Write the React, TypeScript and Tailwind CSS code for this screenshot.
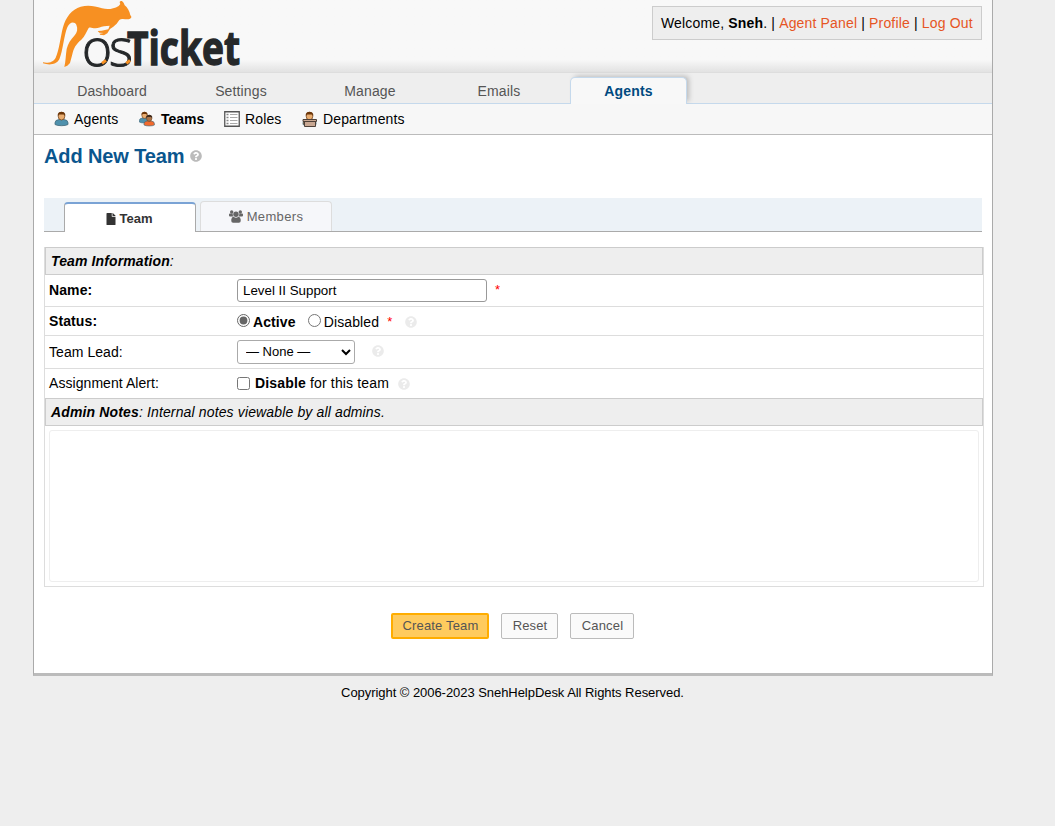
import React from "react";
import { FaQuestionCircle, FaFile } from "react-icons/fa";

function Logo() {
  return (
    <svg className="block h-[72px] w-[225px] shrink-0 overflow-visible" viewBox="0 0 675 216">
      <path
        fill="#f79022"
        d="M39 187C54 190 70 187 77 173C88 150 91 112 99 82C107 52 125 28 152 20C178 14 194 19 216 25C232 29 249 28 266 18L271 12C267 6 270 2 275 3C280 5 282 10 284 16C292 22 299 33 301 46C308 52 302 58 292 58C283 57 274 55 268 60L260 71L250 80L240 87L232 100L222 106L210 104L209 101L221 99L208 98L203 93L215 92L235 88L239 77L222 79C211 81 206 85 196 85C187 85 181 80 176 84C169 96 165 109 154 119C138 132 131 144 127 163L120 189L112 197L103 201C107 186 107 166 110 147C114 130 122 119 133 107C142 98 144 86 139 74C134 64 119 64 112 82C101 109 99 153 88 178C78 196 55 195 39 190Z"
      />
      <g fill="#25282a" stroke="#25282a" fontFamily='"Open Sans", "Noto Sans", sans-serif'>
        <text y="198" fontSize="154" fontWeight="300" strokeWidth="3">
          <tspan x="156">o</tspan>
          <tspan x="237">s</tspan>
        </text>
        <text x="291" y="196" fontSize="140" fontWeight="700" strokeWidth="4" textLength="339" lengthAdjust="spacingAndGlyphs">Ticket</text>
      </g>
      <path d="M216 190L228 181M289 190L300 181" stroke="#f79022" strokeWidth="9" />
    </svg>
  );
}

function Person({ shirt = "#4f91ad", skin = "#e9ad70", hair = "#6b3508" }: { shirt?: string; skin?: string; hair?: string }) {
  return (
    <g>
      <path d="M1 13.500v-1.700Q1 9 5 8.500h5q4 .5 4 3.300v1.700q-2 1.200-6.500 1.200T1 13.500Z" fill={shirt} stroke="#44697a" strokeWidth=".8" />
      <ellipse cx="7.500" cy="5.200" rx="3.300" ry="3.800" fill={skin} stroke="#75441c" strokeWidth=".8" />
      <path d="M3.800 5V3Q4.500.8 7.500.8T11.200 3v2L10 3.500H5Z" fill={hair} />
    </g>
  );
}

function NavIcon({ kind }: { kind: string }) {
  return (
    <svg className="block size-4 shrink-0" viewBox="0 0 16 16">
      {kind === "agents" && <Person />}
      {kind === "teams" && (
        <>
          <g transform="translate(-.5 .2) scale(.8)"><Person /></g>
          <g transform="translate(4.200 3.200) scale(.8)"><Person shirt="#f2692c" skin="#a87349" hair="#3e2a1c" /></g>
        </>
      )}
      {kind === "roles" && (
        <>
          <path d="M.75.75h14.500v14.500H.750Z" fill="#fff" stroke="#555" strokeWidth="1.300" />
          <path d="M2.500 3.500h2M2.500 6.500h2M2.500 9.500h2M2.500 12.500h2" stroke="#888" strokeWidth="1.600" />
          <path d="M6 3.500h7.500M6 6.500h7.500M6 9.500h7.500M6 12.500h7.500" stroke="#aaa" />
        </>
      )}
      {kind === "departments" && (
        <>
          <Person shirt="#8b5a2b" />
          <path d="M1 8.500h13.500v2h-1v5h-11v-5H1Z" fill="#c9a893" stroke="#4d4038" />
          <path d="M1.500 10.500h12.500" stroke="#4d4038" />
        </>
      )}
    </svg>
  );
}

function GroupIcon() {
  return (
    <svg className="h-[13px] w-[14px]" viewBox="0 0 14 13" fill="currentColor">
      <circle cx="2.700" cy="2" r="1.700" />
      <circle cx="11.300" cy="2" r="1.700" />
      <circle cx="7" cy="4.200" r="2.700" />
      <path d="M0 4.500Q0 3.500 1 3.500h2.700q-.2 2 .8 3H1Q0 6.500 0 5.500ZM14 4.500Q14 3.500 13 3.500h-2.700q.2 2-.8 3H13q1 0 1-1Z" />
      <path d="M2.300 11V9.500Q2.500 6.800 4.600 6.800 7 8.700 9.400 6.800q2.100 0 2.300 2.700V11q0 1.800-1.800 1.800H4.100Q2.300 12.800 2.300 11Z" />
    </svg>
  );
}

function Help({ className = "" }: { className?: string }) {
  return <FaQuestionCircle className={`size-3 shrink-0 text-[#ebebeb] ${className}`} />;
}

const tabs = ["Dashboard", "Settings", "Manage", "Emails"];

export default function App() {
  return (
    <div className="h-[826px] bg-[#eee] font-['Liberation_Sans',Arial,sans-serif] text-[14px] leading-4 text-black">
      <div className="ml-[33px] flex h-[676px] w-[960px] flex-col border-x border-b-[3px] border-x-[#aaa] border-b-[#bbb] bg-white">
        <header className="flex h-[72px] shrink-0 justify-between bg-linear-to-b from-[#f8f8f8] from-[83%] to-[#e2e2e2]">
          <div className="-ml-1"><Logo /></div>
          <div className="mt-1.5 mr-2.5 flex h-[34px] w-[330px] items-center border border-[#ccc] bg-[#eee] pl-2 text-[14px] tracking-[0.16px] whitespace-pre">
            Welcome, <b>Sneh</b>. | <a className="text-[#e65524]">Agent Panel</a> | <a className="text-[#e65524]">Profile</a> | <a className="text-[#e65524]">Log Out</a>
          </div>
        </header>
        <nav className="flex h-8 shrink-0 border-t border-b border-t-[#ddd] border-b-[#c5d9ec] bg-[#eee] pl-[19px] tracking-[0.14px] text-[#555]">
          {tabs.map((t) => (
            <a key={t} className="mr-[11px] h-[30px] w-[118px] pt-2.5 text-center">{t}</a>
          ))}
          <a className="mt-1 -mb-px ml-px h-[27px] w-[117px] rounded-t-[5px] border border-b-0 border-[#c5d9ec] bg-[#f8f8f8] pt-[5px] text-center font-bold text-[#004a80] shadow-[3px_-2px_5px_-1px_#bbb]">Agents</a>
        </nav>
        <nav className="z-10 -mt-px flex h-8 shrink-0 items-center border-b border-[#bbb] pt-px pl-5 tracking-[0.14px] [background:linear-gradient(#f7f7f7,#f7f7f7)_0_1px_no-repeat]">
          <a className="flex w-[85px] items-center gap-1"><NavIcon kind="agents" />Agents</a>
          <a className="flex w-[85px] items-center gap-1.5 font-bold tracking-normal"><NavIcon kind="teams" />Teams</a>
          <a className="flex w-[78px] items-center gap-[5px]"><NavIcon kind="roles" />Roles</a>
          <a className="flex items-center gap-[5px]"><NavIcon kind="departments" />Departments</a>
        </nav>
        <main className="px-2.5">
          <h1 className="mt-2 flex h-[26px] items-center text-[20px] font-bold tracking-[-0.12px] text-[#0a568e]">
            Add New Team<Help className="ml-1.5 text-[#bbb]!" />
          </h1>
          <div className="mt-[29px] flex h-[34px] w-[938px] border-b border-[#aaa] bg-[#ecf2f7] pl-5 text-[13px] tracking-[0.35px]">
            <div className="mt-1 -mb-px flex h-[30px] w-[132px] items-center justify-center gap-[3px] rounded-t border border-t-2 border-b-0 border-[#aaa] border-t-[#7aa3d5] bg-white pt-px pr-[3px] font-bold tracking-normal text-[#333]"><FaFile className="size-[12px]" />Team</div>
            <div className="mt-[3px] ml-1 flex h-[30px] w-[132px] items-center justify-center gap-1 rounded-t border border-b-0 border-[#ddd] bg-[#f6f7fa] text-[#666]"><GroupIcon />Members</div>
          </div>
          <section className="mt-[15px] h-[340px] w-[940px] border border-[#ddd]">
            <div className="-mt-px h-7 border border-[#ccc] bg-[#eee] px-[5px] pt-[5px] italic tracking-[0.12px]"><b>Team Information</b>:</div>
            <div className="flex h-8 items-center border-b border-[#ddd] pl-1">
              <b className="w-[188px] pb-0.5 tracking-[0.1px]">Name:</b>
              <input defaultValue="Level II Support" className="h-[23px] w-[250px] rounded-[3px] border border-[#999] px-[5px] text-[13.333px] outline-none" />
              <span className="ml-2 pb-0.5 text-[13px] text-[#f00]">*</span>
            </div>
            <div className="flex h-[29px] items-center border-b border-[#ddd] pl-1">
              <b className="w-[188px] tracking-[0.1px]">Status:</b>
              <input type="radio" defaultChecked name="status" className="mb-px size-[13px] accent-[#666]" />
              <b className="ml-[3px] pt-0.5 tracking-[0.1px]">Active</b>
              <input type="radio" name="status" className="mb-px ml-3 size-[13px]" />
              <span className="ml-[3px] pt-0.5 tracking-[0.14px]">Disabled</span>
              <span className="ml-2 pt-px text-[13px] text-[#f00]">*</span><Help className="mt-px ml-[13px]" />
            </div>
            <div className="flex h-[33px] items-center border-b border-[#ddd] pl-1">
              <span className="w-[188px] tracking-[0.06px]">Team Lead:</span>
              <select className="h-6 w-[118px] rounded-[3px] border border-[#aaa] bg-white pb-px pl-1 text-[13px]"><option>— None —</option></select>
              <Help className="mb-0.5 ml-[17px]" />
            </div>
            <div className="flex h-[29px] items-center pl-1">
              <span className="w-[188px] pb-px tracking-[0.06px]">Assignment Alert:</span>
              <input type="checkbox" className="mr-[5px] size-[13px]" />
              <span className="pb-px tracking-[0.16px]"><b>Disable</b> for this team</span><Help className="ml-[9px]" />
            </div>
            <div className="h-7 border border-[#ccc] bg-[#eee] px-[5px] pt-[5px] italic tracking-[0.14px]"><b>Admin Notes</b>: Internal notes viewable by all admins.</div>
            <div className="mx-1 mt-1 h-[152px] rounded-[3px] border border-[#eee]" />
          </section>
          <div className="mt-[26px] flex justify-center gap-3 pr-px text-[13px] tracking-[0.15px] text-[#555]">
            <button className="h-[26px] w-[98px] rounded-[2px] border-2 border-[#ffad00] bg-[#ffcb5e] pb-px pl-px">Create Team</button>
            <button className="h-[26px] w-[57px] rounded-[2px] border border-[#bbb] bg-[#fafafa] pb-px pl-px">Reset</button>
            <button className="h-[26px] w-16 rounded-[2px] border border-[#bbb] bg-[#fafafa] pb-px pl-px">Cancel</button>
          </div>
        </main>
      </div>
      <footer className="w-[1025px] pt-[9px] text-center text-[13px] tracking-[-0.05px]">Copyright © 2006-2023 SnehHelpDesk All Rights Reserved.</footer>
    </div>
  );
}
